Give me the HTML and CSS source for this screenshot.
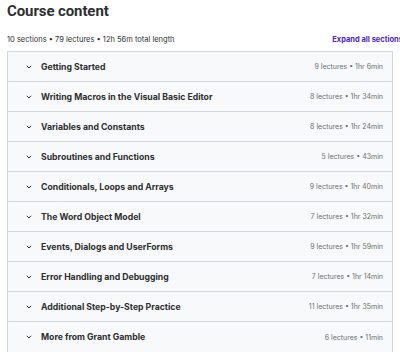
FILE: index.html
```html
<!DOCTYPE html>
<html>

<head>
  <link rel="stylesheet" href="styles.css">
</head>

<body>

  <h2 class="title">Course content</h2>

  <div class="meta">
    <span class="stats">10 sections • 79 lectures • 12h 56m total length</span>
    <a class="expand" href="#">Expand all sections</a>
  </div>

  <div class="sections">
    <div class="section">
      <span class="chev"><svg width="6" height="4" viewBox="0 0 6 4"><path d="M0.8 0.8l2.2 2.2 2.2-2.2" fill="none" stroke="#2d2f31" stroke-width="1"/></svg></span>
      <span class="name">Getting Started</span>
      <span class="info">9 lectures • 1hr 6min</span>
    </div>
    <div class="section">
      <span class="chev"><svg width="6" height="4" viewBox="0 0 6 4"><path d="M0.8 0.8l2.2 2.2 2.2-2.2" fill="none" stroke="#2d2f31" stroke-width="1"/></svg></span>
      <span class="name">Writing Macros in the Visual Basic Editor</span>
      <span class="info">8 lectures • 1hr 34min</span>
    </div>
    <div class="section">
      <span class="chev"><svg width="6" height="4" viewBox="0 0 6 4"><path d="M0.8 0.8l2.2 2.2 2.2-2.2" fill="none" stroke="#2d2f31" stroke-width="1"/></svg></span>
      <span class="name">Variables and Constants</span>
      <span class="info">8 lectures • 1hr 24min</span>
    </div>
    <div class="section">
      <span class="chev"><svg width="6" height="4" viewBox="0 0 6 4"><path d="M0.8 0.8l2.2 2.2 2.2-2.2" fill="none" stroke="#2d2f31" stroke-width="1"/></svg></span>
      <span class="name">Subroutines and Functions</span>
      <span class="info">5 lectures • 43min</span>
    </div>
    <div class="section">
      <span class="chev"><svg width="6" height="4" viewBox="0 0 6 4"><path d="M0.8 0.8l2.2 2.2 2.2-2.2" fill="none" stroke="#2d2f31" stroke-width="1"/></svg></span>
      <span class="name">Conditionals, Loops and Arrays</span>
      <span class="info">9 lectures • 1hr 40min</span>
    </div>
    <div class="section">
      <span class="chev"><svg width="6" height="4" viewBox="0 0 6 4"><path d="M0.8 0.8l2.2 2.2 2.2-2.2" fill="none" stroke="#2d2f31" stroke-width="1"/></svg></span>
      <span class="name">The Word Object Model</span>
      <span class="info">7 lectures • 1hr 32min</span>
    </div>
    <div class="section">
      <span class="chev"><svg width="6" height="4" viewBox="0 0 6 4"><path d="M0.8 0.8l2.2 2.2 2.2-2.2" fill="none" stroke="#2d2f31" stroke-width="1"/></svg></span>
      <span class="name">Events, Dialogs and UserForms</span>
      <span class="info">9 lectures • 1hr 59min</span>
    </div>
    <div class="section">
      <span class="chev"><svg width="6" height="4" viewBox="0 0 6 4"><path d="M0.8 0.8l2.2 2.2 2.2-2.2" fill="none" stroke="#2d2f31" stroke-width="1"/></svg></span>
      <span class="name">Error Handling and Debugging</span>
      <span class="info">7 lectures • 1hr 14min</span>
    </div>
    <div class="section">
      <span class="chev"><svg width="6" height="4" viewBox="0 0 6 4"><path d="M0.8 0.8l2.2 2.2 2.2-2.2" fill="none" stroke="#2d2f31" stroke-width="1"/></svg></span>
      <span class="name">Additional Step-by-Step Practice</span>
      <span class="info">11 lectures • 1hr 35min</span>
    </div>
    <div class="section">
      <span class="chev"><svg width="6" height="4" viewBox="0 0 6 4"><path d="M0.8 0.8l2.2 2.2 2.2-2.2" fill="none" stroke="#2d2f31" stroke-width="1"/></svg></span>
      <span class="name">More from Grant Gamble</span>
      <span class="info">6 lectures • 11min</span>
    </div>
  </div>

</body>

</html>
```

FILE: styles.css
```css
* {
  box-sizing: border-box;
}

body {
  margin: 0;
  padding: 0 7px;
  font-family: "Inter", "Liberation Sans", sans-serif;
  color: #2d2f31;
  background: #fff;
  overflow: hidden;
  width: 400px;
}

.title {
  margin: 0;
  padding-top: 1px;
  font-family: "Roboto", "Liberation Sans", sans-serif;
  font-size: 15px;
  font-weight: 700;
  line-height: 20px;
  letter-spacing: -0.1px;
}

.meta {
  display: flex;
  justify-content: space-between;
  align-items: center;
  margin-top: 12px;
  height: 12px;
  white-space: nowrap;
  width: 410px;
}

.stats {
  font-size: 7.5px;
  color: #2d2f31;
}

.expand {
  font-size: 7.5px;
  font-weight: 700;
  color: #5022c3;
  text-decoration: none;
  margin-right: 14px;
}

.sections {
  margin-top: 6px;
  border: 1px solid #d1d7dc;
  width: 386px;
}

.section {
  display: flex;
  align-items: center;
  height: 30px;
  background: #f7f9fa;
  border-bottom: 1px solid #d1d7dc;
  padding: 0 9px 0 18px;
}

.section:last-child {
  border-bottom: none;
}

.chev {
  display: flex;
  width: 15px;
}

.name {
  flex: 1;
  font-size: 8.7px;
  font-weight: 700;
}

.info {
  font-size: 7px;
  color: #6a6f73;
}
```
